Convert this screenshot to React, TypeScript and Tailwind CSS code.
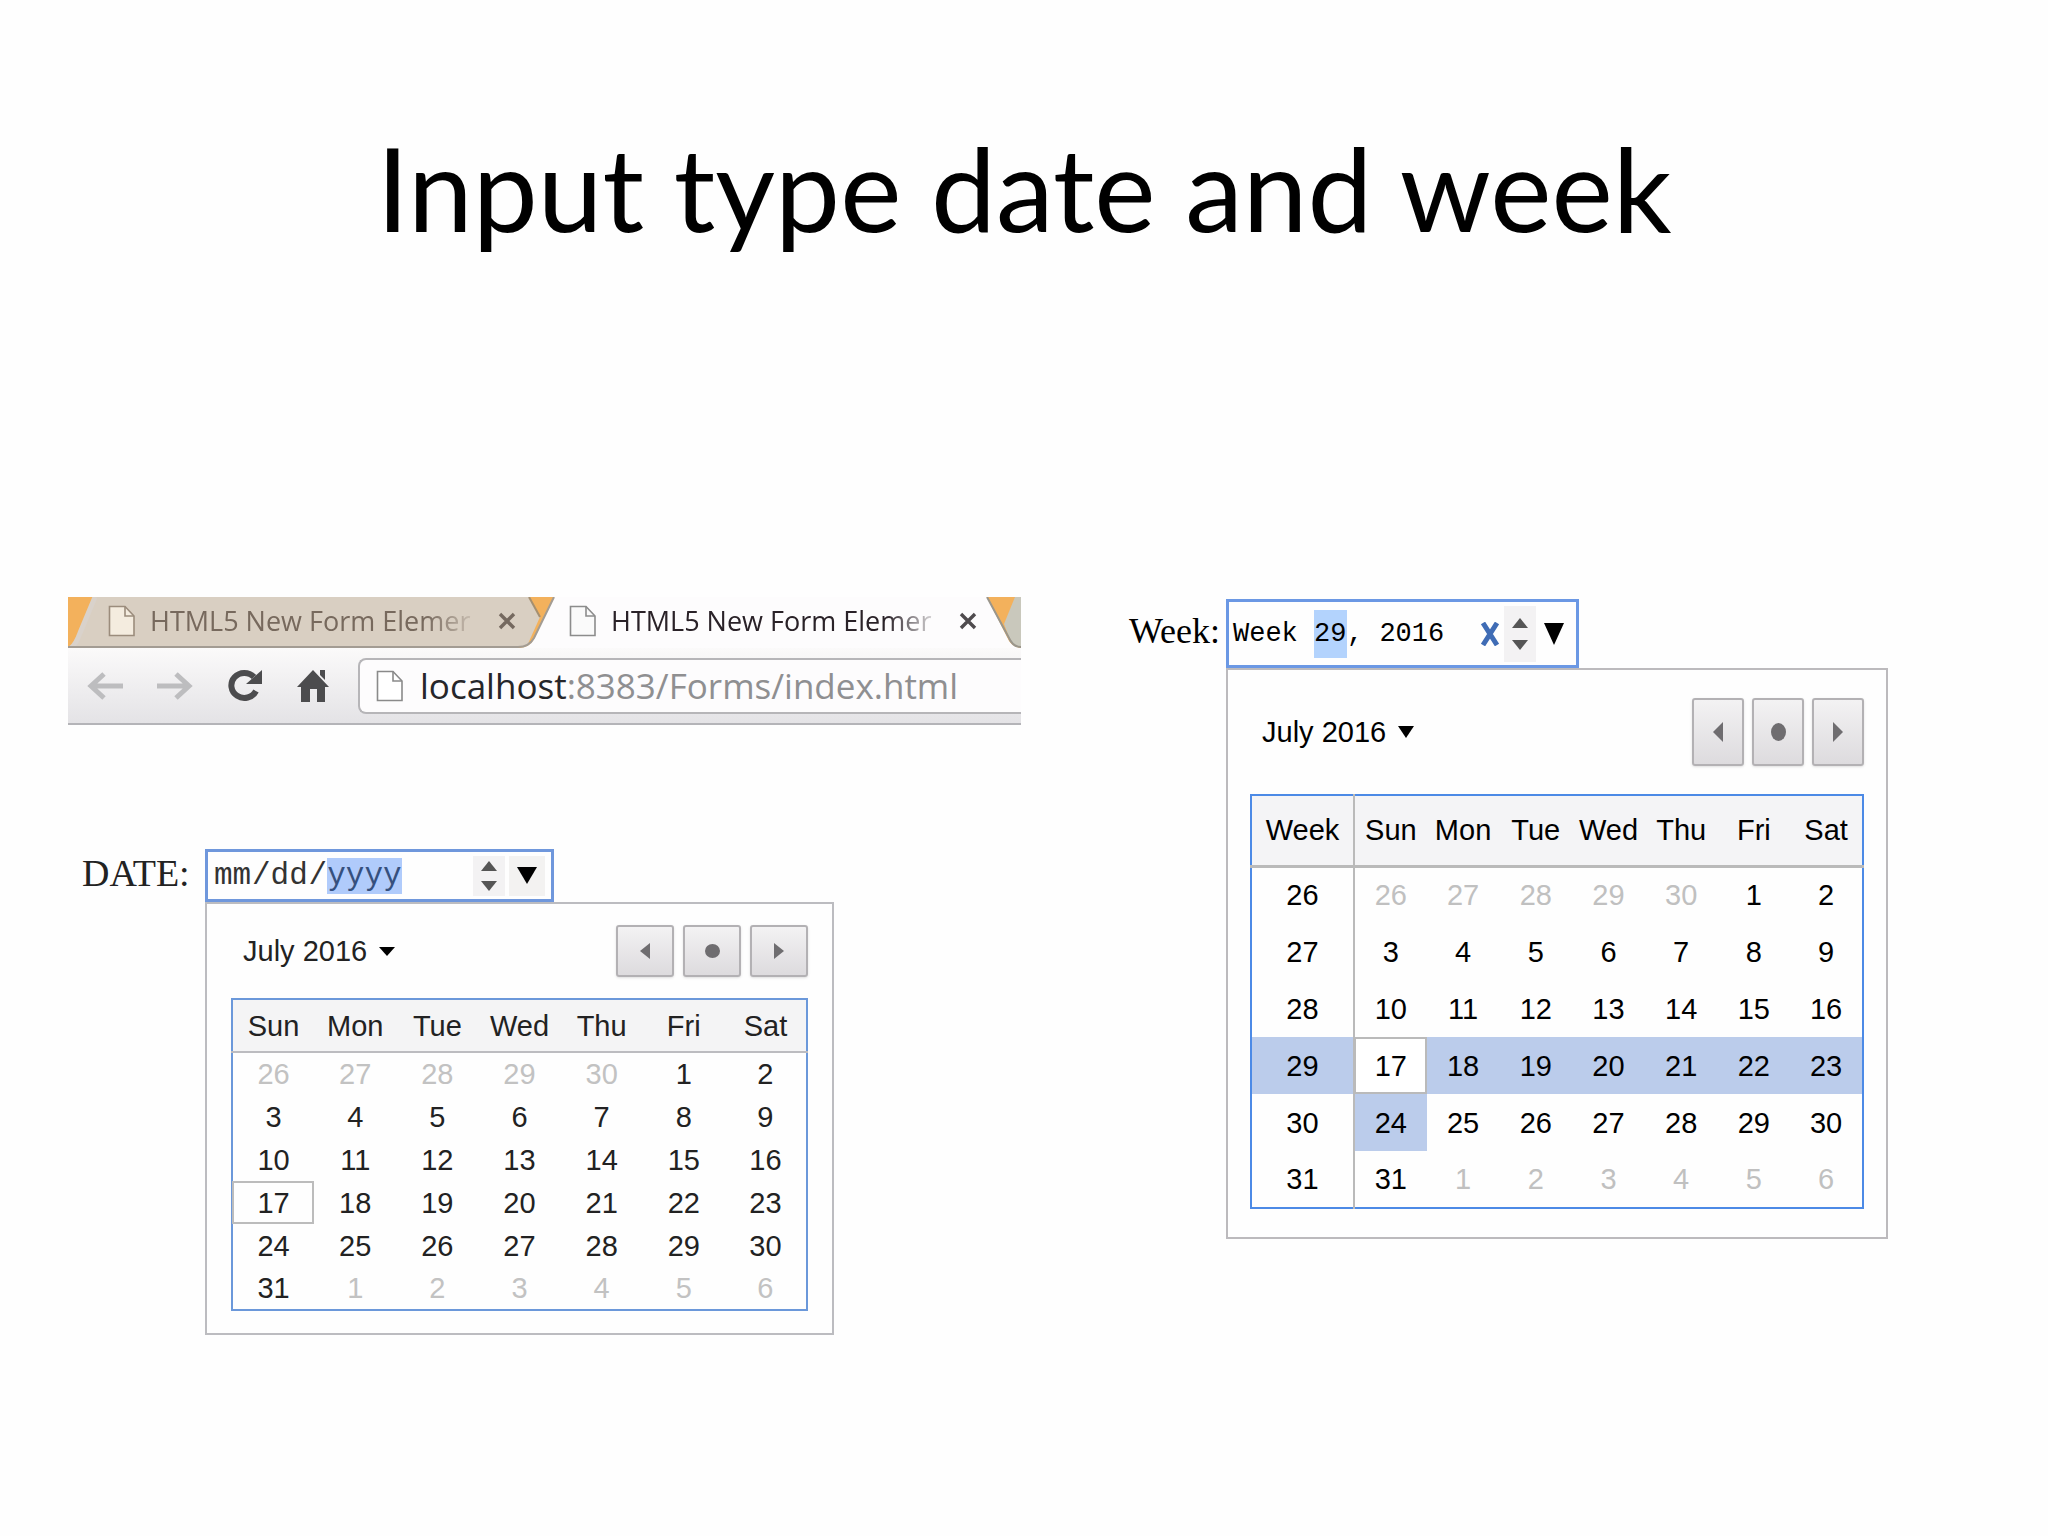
import { useState } from 'react';
import { clsx } from 'clsx';

const days = ['Sun', 'Mon', 'Tue', 'Wed', 'Thu', 'Fri', 'Sat'];

const weeks = [
  { week: 26, dates: [26, 27, 28, 29, 30, 1, 2] },
  { week: 27, dates: [3, 4, 5, 6, 7, 8, 9] },
  { week: 28, dates: [10, 11, 12, 13, 14, 15, 16] },
  { week: 29, dates: [17, 18, 19, 20, 21, 22, 23] },
  { week: 30, dates: [24, 25, 26, 27, 28, 29, 30] },
  { week: 31, dates: [31, 1, 2, 3, 4, 5, 6] },
];

// first row holds the end of June, last row the start of August
const isOutside = (row: number, date: number) => (row === 0 && date > 20) || (row === 5 && date < 20);

function PageIcon({ fill = '#fff', stroke = '#8a8a8a' }: { fill?: string; stroke?: string }) {
  return (
    <svg width="28" height="32" viewBox="0 0 28 32" className="shrink-0">
      <path d="M1.5 1.5H17L26 11V30.5H1.5Z" fill={fill} stroke={stroke} strokeWidth="1.6" />
      <path d="M17 1.5V11H26" fill="none" stroke={stroke} strokeWidth="1.6" />
    </svg>
  );
}

function CloseIcon({ color }: { color: string }) {
  return (
    <svg width="18" height="18" viewBox="0 0 18 18">
      <path d="M2 2L16 16M16 2L2 16" stroke={color} strokeWidth="3.4" />
    </svg>
  );
}

function BrowserTab({ active }: { active?: boolean }) {
  return (
    <div className={clsx('relative flex h-12 items-center', active ? 'text-[#2a2228]' : 'text-[#77695d]')}>
      <button role="tab" aria-selected={!!active} className="flex items-center gap-3.5">
        <PageIcon fill={active ? '#fafafa' : '#f4ecdf'} stroke={active ? '#8c8c8c' : '#9b8c7c'} />
        <span className="w-[328px] overflow-hidden text-left text-[27px] leading-9 whitespace-nowrap [mask-image:linear-gradient(to_right,#000_84%,transparent_101%)]">
          HTML5 New Form Elemer
        </span>
      </button>
      <button aria-label="Close tab" className="ml-5">
        <CloseIcon color={active ? '#4f4b4e' : '#75695f'} />
      </button>
    </div>
  );
}

function Browser() {
  return (
    <div className="overflow-hidden border-b-2 border-[#b4b4b8] font-['Open_Sans',sans-serif]">
      <div role="tablist" className="relative flex h-[51px] gap-[53px] pl-10">
        <svg className="absolute inset-0 h-full w-full" viewBox="0 0 953 51" preserveAspectRatio="none">
          <rect width="953" height="51" fill="#f3b15c" />
          <path d="M27 0H461L472 20L459 49H4Z" fill="#d9cfc2" />
          <path d="M27 0L12 36Q8 47 3 51" fill="none" stroke="#d9d2cb" strokeWidth="5" />
          <path d="M461 0L472 20" stroke="#a58f70" strokeWidth="2" />
          <path d="M486 0L467 40Q463 50 452 51H953V51Q943 50 939 40L919 0Z" fill="#fdfcfd" />
          <path d="M0 50H450Q461 50 466 41L486 0" fill="none" stroke="#a39c93" strokeWidth="2" />
          <path d="M953 0H947L936 27L941 40Q945 50 953 50Z" fill="#c9c8bc" />
          <path d="M919 0L941 41Q945 50 953 50" fill="none" stroke="#9a968c" strokeWidth="2" />
        </svg>
        <BrowserTab />
        <BrowserTab active />
      </div>
      <div className="flex h-[75px] items-center bg-linear-to-b from-[#fbfafa] to-[#e4e3e6] pl-[18px]">
        <button aria-label="Back">
          <svg width="38" height="30" viewBox="0 0 38 30" fill="none" stroke="#bdbdbf" strokeWidth="5">
            <path d="M37 15H5M18 3L5 15L18 27" />
          </svg>
        </button>
        <button aria-label="Forward" className="ml-8">
          <svg width="38" height="30" viewBox="0 0 38 30" fill="none" stroke="#bdbdbf" strokeWidth="5">
            <path d="M1 15H33M20 3L33 15L20 27" />
          </svg>
        </button>
        <button aria-label="Reload" className="ml-8">
          <svg width="38" height="34" viewBox="0 0 38 34">
            <path d="M30 22A13 12.500 0 1 1 28 8" fill="none" stroke="#4c4c4e" strokeWidth="6" />
            <path d="M36 1V15H20Z" fill="#4c4c4e" />
          </svg>
        </button>
        <button aria-label="Home" className="ml-8">
          <svg width="34" height="34" viewBox="0 0 34 34" fill="#4c4c4e">
            <path d="M17 1L33 18H29V33H21V20H14V33H5V18H1Z" />
            <path d="M24 1H29V11L24 6Z" />
          </svg>
        </button>
        <div className="ml-7 flex h-[56px] min-w-0 flex-1 items-center gap-4 rounded-l-lg border-y-2 border-l-2 border-[#b6b5b8] bg-[#fdfcfd] pl-4">
          <PageIcon />
          <a href="#localhost" className="text-[35px] leading-10 whitespace-nowrap text-[#8f8f91]">
            <span className="text-[#26262a]">localhost</span>:8383/Forms/index.html
          </a>
        </div>
      </div>
    </div>
  );
}

function Spinner({ tall }: { tall?: boolean }) {
  return (
    <div className={clsx('flex flex-col items-center justify-center bg-[#f3f2f3]', tall ? 'h-[56px] w-8 gap-3' : 'h-10 w-8 gap-2.5')}>
      <button aria-label="Increase">
        <svg width="16" height="10" viewBox="0 0 16 10" preserveAspectRatio="none">
          <path d="M8 0L16 10H0Z" fill="#555" />
        </svg>
      </button>
      <button aria-label="Decrease">
        <svg width="16" height="10" viewBox="0 0 16 10" preserveAspectRatio="none">
          <path d="M8 10L16 0H0Z" fill="#555" />
        </svg>
      </button>
    </div>
  );
}

function OpenButton({ tall }: { tall?: boolean }) {
  return (
    <button aria-label="Open calendar" className="flex w-9 items-center justify-center">
      <svg width="20" height={tall ? 22 : 17} viewBox="0 0 20 17" preserveAspectRatio="none">
        <path d="M0 0H20L10 17Z" fill="#000" />
      </svg>
    </button>
  );
}

function MonthBar({ tall }: { tall?: boolean }) {
  const button = clsx(
    'flex items-center justify-center rounded-[3px] border-2 border-[#b3b1b4] bg-linear-to-b from-[#f3f2f3] to-[#dddbde] shadow-sm',
    tall ? 'h-[68px] w-[52px]' : 'h-[52px] w-[58px]',
  );
  return (
    <div className="flex items-center justify-between">
      <button className="flex items-center gap-3 pl-3">
        July 2016
        <svg width="16" height={tall ? 12 : 9} viewBox="0 0 16 10" preserveAspectRatio="none">
          <path d="M0 0H16L8 10Z" fill="#000" />
        </svg>
      </button>
      <div className={clsx('flex', tall ? 'gap-2' : 'gap-[9px]')}>
        <button aria-label="Previous month" className={button}>
          <svg width="10" height={tall ? 20 : 16} viewBox="0 0 10 16" preserveAspectRatio="none">
            <path d="M10 0V16L0 8Z" fill="#6f6d70" />
          </svg>
        </button>
        <button aria-label="Current month" className={button}>
          <svg width="15" height={tall ? 18 : 14} viewBox="0 0 14 14" preserveAspectRatio="none">
            <circle cx="7" cy="7" r="7" fill="#6f6d70" />
          </svg>
        </button>
        <button aria-label="Next month" className={button}>
          <svg width="10" height={tall ? 20 : 16} viewBox="0 0 10 16" preserveAspectRatio="none">
            <path d="M0 0V16L10 8Z" fill="#6f6d70" />
          </svg>
        </button>
      </div>
    </div>
  );
}

function DateField() {
  const [year, setYear] = useState('yyyy');
  return (
    <div className="flex pl-3.5">
      <label htmlFor="year" className="w-[123px] pt-1 font-['Liberation_Serif',serif] text-[38px] leading-10 text-[#222]">
        DATE:
      </label>
      <div>
        <div className="flex h-[53px] w-[349px] items-center border-3 border-[#6f97dc] pl-1.5 font-['Liberation_Mono',monospace] text-[31px] leading-9 text-[#333]">
          <input aria-label="Month" defaultValue="mm" className="w-[38px] outline-none" />
          <span>/</span>
          <input aria-label="Day" defaultValue="dd" className="w-[38px] outline-none" />
          <span>/</span>
          <input
            id="year"
            value={year}
            onChange={(e) => setYear(e.target.value)}
            className="w-[75px] bg-[#b0cbfb] text-[#35507e] outline-none"
          />
          <div className="ml-auto flex pr-1.5">
            <Spinner />
            <div className="ml-1 flex bg-[#f3f2f1]">
              <OpenButton />
            </div>
          </div>
        </div>
        <div className="w-[629px] border-2 border-[#bcbcc0] px-6 pt-[21px] pb-[22px] font-['Liberation_Sans',sans-serif] text-[29px] leading-8 text-[#222]">
          <MonthBar />
          <table className="mt-[21px] w-full table-fixed border-collapse border-2 border-[#6b98da] text-center">
            <thead>
              <tr className="h-[53px] border-b-2 border-[#bcbcc0] bg-[#f4f4f5]">
                {days.map((day) => (
                  <th key={day} className="p-0 font-normal">
                    {day}
                  </th>
                ))}
              </tr>
            </thead>
            <tbody>
              {weeks.map(({ week, dates }, row) => (
                <tr key={week} className="h-[43px]">
                  {dates.map((date) => (
                    <td
                      key={date}
                      className={clsx(
                        'p-0',
                        isOutside(row, date) && 'text-[#c2c2c2]',
                        row === 3 && date === 17 && 'outline-2 -outline-offset-2 outline-[#bcbcbc]',
                      )}
                    >
                      {date}
                    </td>
                  ))}
                </tr>
              ))}
            </tbody>
          </table>
        </div>
      </div>
    </div>
  );
}

function WeekField() {
  const [week, setWeek] = useState('29');
  return (
    <div className="flex">
      <label htmlFor="week" className="w-[97px] pt-2 font-['Liberation_Serif',serif] text-[36px] leading-12 text-black">
        Week:
      </label>
      <div>
        <div className="flex h-[69px] w-[353px] items-center border-3 border-[#6b98e4] pl-1 font-['Liberation_Mono',monospace] text-[27px] leading-12 text-black">
          <span className="whitespace-pre">Week </span>
          <input
            id="week"
            value={week}
            onChange={(e) => setWeek(e.target.value)}
            className="h-12 w-[33px] bg-[#b3d3fd] outline-none"
          />
          <span className="whitespace-pre">, </span>
          <input aria-label="Year" defaultValue="2016" className="w-[70px] outline-none" />
          <button aria-label="Clear" className="ml-auto">
            <svg width="20" height="24" viewBox="0 0 20 24">
              <path d="M3 1L17 23M17 1L3 23" stroke="#3f6cb5" strokeWidth="5" />
            </svg>
          </button>
          <div className="ml-1 flex pr-1">
            <Spinner tall />
            <OpenButton tall />
          </div>
        </div>
        <div className="w-[662px] border-2 border-[#bcbabd] px-[22px] pt-7 pb-7 font-['Liberation_Sans',sans-serif] text-[29px] leading-10 text-black">
          <MonthBar tall />
          <table className="mt-7 w-full table-fixed border-collapse border-2 border-[#4c8ae6] text-center">
            <thead>
              <tr className="h-[71px] border-b-3 border-[#bababa] bg-[#f4f4f6]">
                <th className="w-[103px] border-r-2 border-r-[#bababa] p-0 font-normal">Week</th>
                {days.map((day) => (
                  <th key={day} className="p-0 font-normal">
                    {day}
                  </th>
                ))}
              </tr>
            </thead>
            <tbody>
              {weeks.map((item, row) => (
                <tr key={item.week} className={clsx('h-[57px]', item.week === 29 && 'bg-[#bbcceb]')}>
                  <td className="border-r-2 border-[#bababa] p-0">{item.week}</td>
                  {item.dates.map((date) => (
                    <td
                      key={date}
                      className={clsx(
                        'p-0',
                        isOutside(row, date) && 'text-[#c0c0c0]',
                        row === 3 && date === 17 && 'bg-white outline-2 -outline-offset-2 outline-[#bababa]',
                        row === 4 && date === 24 && 'bg-[#bbcceb]',
                      )}
                    >
                      {date}
                    </td>
                  ))}
                </tr>
              ))}
            </tbody>
          </table>
        </div>
      </div>
    </div>
  );
}

export default function App() {
  return (
    <main className="min-h-screen bg-[#fefefe] pt-[118px]">
      <h1 className="text-center font-['Lato',sans-serif] text-[116px] leading-[140px] text-black">
        Input type date and week
      </h1>
      <div className="mt-[339px] grid grid-cols-[953fr_760fr] gap-[108px] pr-[159px] pl-[68px]">
        <section className="flex flex-col gap-[124px]">
          <Browser />
          <DateField />
        </section>
        <section className="pt-0.5">
          <WeekField />
        </section>
      </div>
    </main>
  );
}
